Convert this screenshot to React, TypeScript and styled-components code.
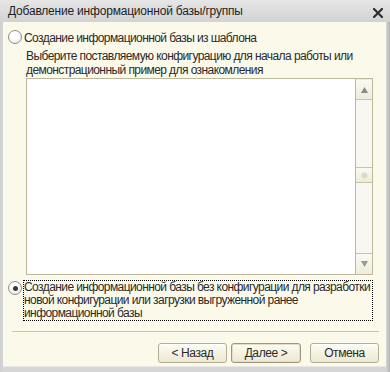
import { createGlobalStyle } from 'styled-components';
import styled from 'styled-components';

const GlobalStyle = createGlobalStyle`
  html, body {
    margin: 0;
    padding: 0;
    background: #b8b8b8;
  }
  * {
    box-sizing: border-box;
  }
`;

const Frame = styled.div`
  width: 390px;
  height: 372px;
  display: flex;
  flex-direction: column;
  padding: 0 4px 6px 3px;
  background: linear-gradient(to right, #cfcfcf 0, #d6d6d6 3px, #d6d6d6 386px, #b4b4b4 390px);
  font-family: 'Liberation Sans', Arial, sans-serif;
  font-size: 12px;
  letter-spacing: -0.58px;
  color: #2a2a2a;
`;

const TitleBar = styled.div`
  flex: none;
  height: 22px;
  margin: 0 -4px 0 -3px;
  padding: 0 7px 0 8px;
  display: flex;
  align-items: center;
  justify-content: space-between;
  background: linear-gradient(to bottom, #e6e6e6, #d2d2d2);
  color: #1e1e1e;
  letter-spacing: -0.2px;
  white-space: nowrap;
`;

const CloseIcon = styled.svg`
  width: 10px;
  height: 10px;
  margin-top: 3px;
`;

const Client = styled.div`
  flex: 1;
  min-height: 0;
  display: flex;
  flex-direction: column;
  padding: 7px 13px 6px 5px;
  background: #fbf9ea;
  box-shadow: 0 1px 0 #e8e8e8;
`;

const RadioRow = styled.div<{ $focused?: boolean }>`
  flex: none;
  display: flex;
  align-items: flex-start;
  gap: 1px;
  margin-top: ${(p) => (p.$focused ? '5px' : '0')};
`;

const RadioCircle = styled.span<{ $checked?: boolean }>`
  flex: none;
  width: 14px;
  height: 14px;
  margin-top: 1px;
  border-radius: 50%;
  border: 1px solid #8c8c8c;
  background: radial-gradient(circle at 40% 35%, #ffffff 30%, #e4e4e0 100%);
  display: flex;
  align-items: center;
  justify-content: center;
  &::after {
    content: '';
    display: ${(p) => (p.$checked ? 'block' : 'none')};
    width: 5px;
    height: 5px;
    border-radius: 50%;
    background: #3a3a3a;
  }
`;

const RadioLabel = styled.div<{ $focused?: boolean }>`
  flex: 1;
  min-width: 0;
  line-height: ${(p) => (p.$focused ? '13px' : '14px')};
  padding: ${(p) => (p.$focused ? '0' : '1px 0')};
  white-space: nowrap;
  border: 1px dotted ${(p) => (p.$focused ? '#000' : 'transparent')};
`;

const Description = styled.div`
  flex: none;
  margin: 2px 0 1px 18px;
  line-height: 14px;
  white-space: nowrap;
`;

const ListBox = styled.div`
  flex: none;
  margin-left: 18px;
  height: 197px;
  display: flex;
  border: 1px solid #bdb89c;
  background: #ffffff;
`;

const ListBody = styled.div`
  flex: 1;
`;

const ScrollBar = styled.div`
  width: 17px;
  display: flex;
  flex-direction: column;
  border-left: 1px solid #bdb89c;
  background: #f8f7f1;
`;

const ScrollButton = styled.div<{ $thumb?: boolean }>`
  flex: none;
  height: ${(p) => (p.$thumb ? '16px' : '21px')};
  display: flex;
  align-items: center;
  justify-content: center;
  background: linear-gradient(to bottom, #fbfaf2, #efecd9);
  border-top: 1px solid ${(p) => (p.$thumb ? '#c9c4a8' : 'transparent')};
  border-bottom: 1px solid #c9c4a8;
  &:last-child {
    border-bottom: none;
    border-top: 1px solid #c9c4a8;
  }
`;

const Track = styled.div<{ $size: number }>`
  height: ${(p) => p.$size}px;
  flex: ${(p) => (p.$size ? 'none' : '1')};
`;

const Separator = styled.div`
  flex: none;
  margin: 10px -6px 0 4px;
  height: 1px;
  background: #c9c5b0;
`;

const ButtonRow = styled.div`
  flex: none;
  margin: 11px -6px 0 0;
  display: flex;
  justify-content: flex-end;
`;

const DialogButton = styled.button<{ $primary?: boolean; $gap: number }>`
  width: ${(p) => (p.$primary ? '70px' : '69px')};
  height: 20px;
  margin-left: ${(p) => p.$gap}px;
  padding: 0;
  font-family: inherit;
  font-size: 12px;
  letter-spacing: -0.4px;
  color: #2a2a2a;
  border-radius: 3px;
  border: 1px solid ${(p) => (p.$primary ? '#9e987a' : '#b4ae92')};
  box-shadow: ${(p) => (p.$primary ? 'inset 0 0 0 1px #e4dfc4' : 'inset 0 1px 0 #ffffff')};
  background: linear-gradient(to bottom, #fdfcf4, #ece8d2);
`;

function Arrow({ up }: { up: boolean }) {
  return (
    <svg width="7" height="6" viewBox="0 0 7 6">
      <polygon points={up ? '3.5,0 7,6 0,6' : '0,0 7,0 3.5,6'} fill={up ? '#8a8a8a' : '#9a9a9a'} />
    </svg>
  );
}

export default function App() {
  return (
    <>
      <GlobalStyle />
      <Frame>
        <TitleBar>
          <span>Добавление информационной базы/группы</span>
          <CloseIcon viewBox="0 0 10 10">
            <path d="M1 1 L9 9 M9 1 L1 9" stroke="#2e2e2e" strokeWidth="2.2" strokeLinecap="square" />
          </CloseIcon>
        </TitleBar>
        <Client>
          <RadioRow>
            <RadioCircle />
            <RadioLabel>Создание информационной базы из шаблона</RadioLabel>
          </RadioRow>
          <Description>
            Выберите поставляемую конфигурацию для начала работы или
            <br />
            демонстрационный пример для ознакомления
          </Description>
          <ListBox>
            <ListBody />
            <ScrollBar>
              <ScrollButton>
                <Arrow up />
              </ScrollButton>
              <Track $size={67} />
              <ScrollButton $thumb>
                <svg width="7" height="7" viewBox="0 0 7 7">
                  <circle cx="3.5" cy="3.5" r="3" fill="#dcdacd" />
                </svg>
              </ScrollButton>
              <Track $size={0} />
              <ScrollButton>
                <Arrow up={false} />
              </ScrollButton>
            </ScrollBar>
          </ListBox>
          <RadioRow $focused>
            <RadioCircle $checked />
            <RadioLabel $focused>
              Создание информационной базы без конфигурации для разработки
              <br />
              новой конфигурации или загрузки выгруженной ранее
              <br />
              информационной базы
            </RadioLabel>
          </RadioRow>
          <Separator />
          <ButtonRow>
            <DialogButton $gap={0}>&lt; Назад</DialogButton>
            <DialogButton $gap={4} $primary>
              Далее &gt;
            </DialogButton>
            <DialogButton $gap={9}>Отмена</DialogButton>
          </ButtonRow>
        </Client>
      </Frame>
    </>
  );
}
